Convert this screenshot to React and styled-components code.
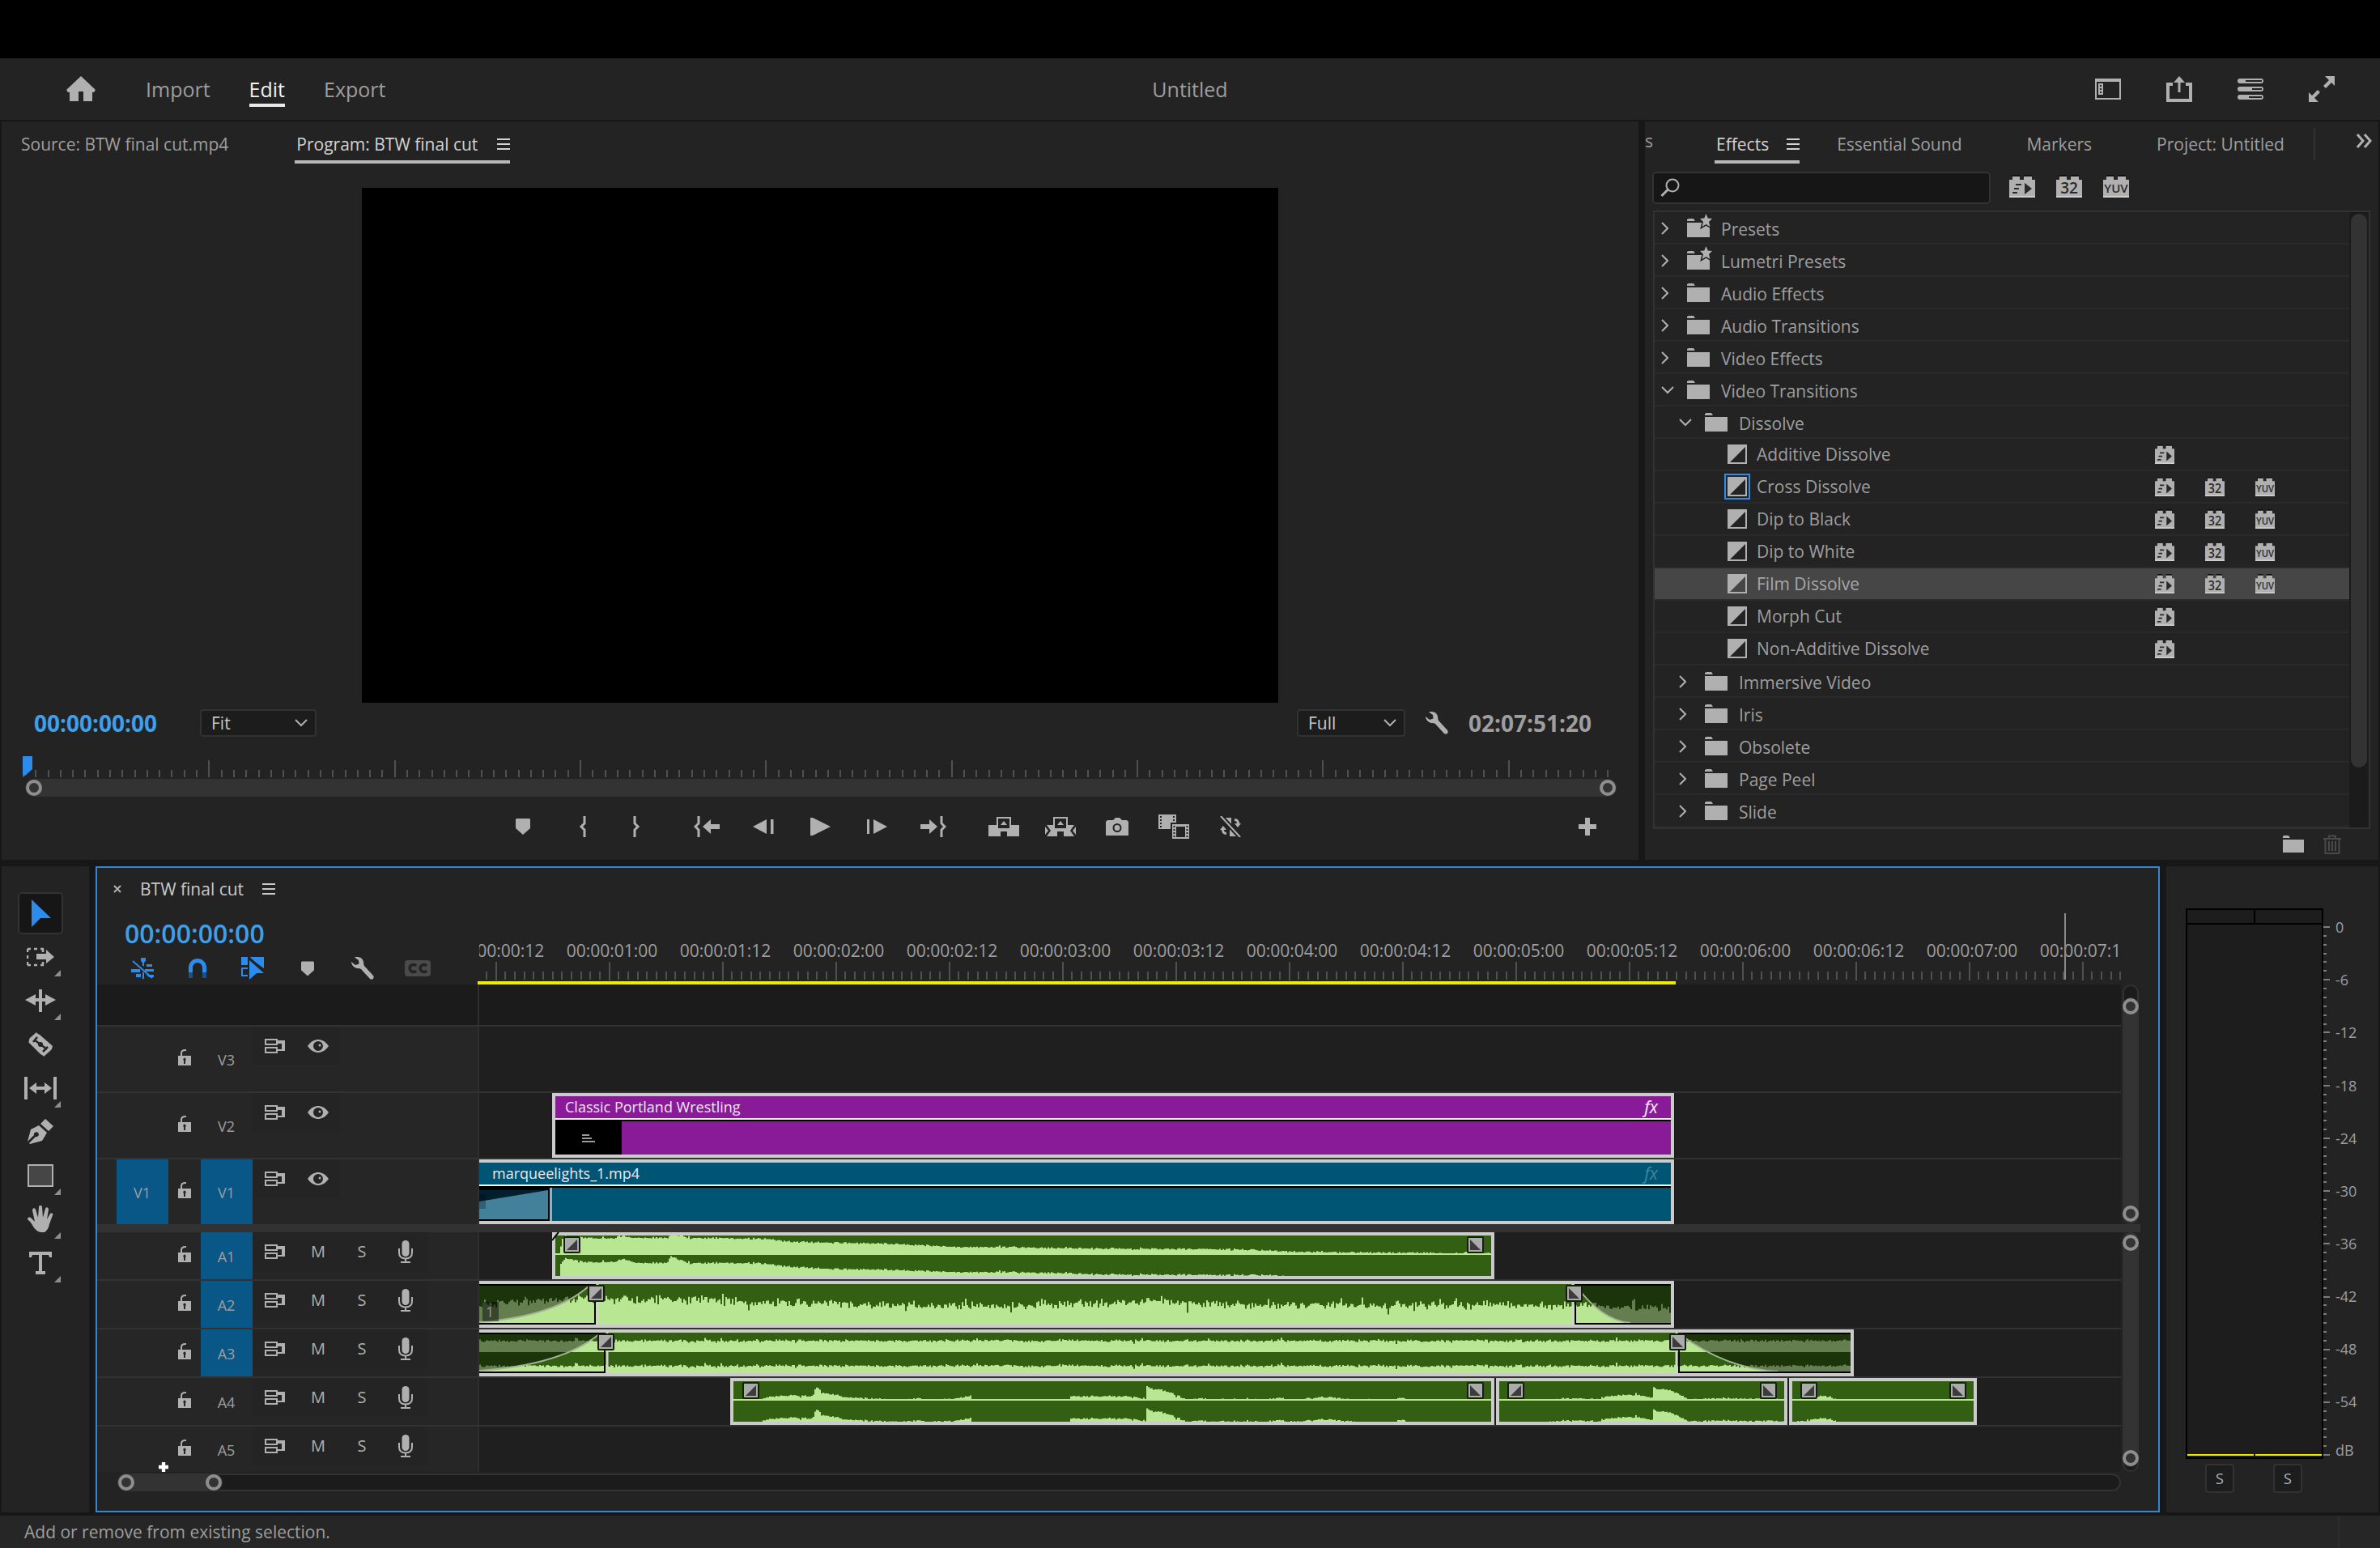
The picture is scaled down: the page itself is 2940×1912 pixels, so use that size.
import React from "react";
import styled, { createGlobalStyle, css } from "styled-components";

const c = {
  gap: "#171717",
  panel: "#232323",
  line: "#323232",
  lane: "#1f1f1f",
  well: "#1b1b1b",
  text: "#9e9e9e",
  bright: "#d2d2d2",
  icon: "#b0b0b0",
  blue: "#2d8ceb",
  time: "#3f9fe8",
  target: "#095786",
  dark: "#335f12",
  light: "#b9e693",
  edge: "#cbcbcb",
};

const Global = createGlobalStyle`
  *, *::before, *::after { box-sizing: border-box; }
  html, body { margin: 0; background: #000; }
  body, button, input, select {
    font-family: "Open Sans", "Noto Sans", sans-serif;
    font-size: 21px;
    line-height: 28px;
    color: ${c.text};
  }
  button, input, select { margin: 0; padding: 0; border: 0; background: none; }
  svg { display: block; flex: none; }
`;

/* ---------- shell ---------- */

const Shell = styled.div`
  display: flex;
  flex-direction: column;
  min-height: 100vh;
  padding-top: 72px;
  background: #000;
`;
const Header = styled.header`
  display: grid;
  grid-template-columns: 1fr auto 1fr;
  align-items: center;
  height: 76px;
  padding: 0 56px;
  background: ${c.panel};
`;
const Nav = styled.nav`
  display: flex;
  align-items: center;
  gap: 48px;
  padding-left: 26px;
`;
const HomeButton = styled.button`
  margin-right: 14px;
  color: ${c.icon};
`;
const NavTab = styled.button`
  height: 44px;
  font-size: 25px;
  border-top: 4px solid transparent;
  border-bottom: 4px solid ${(p) => (p.$on ? "#e8e8e8" : "transparent")};
  color: ${(p) => (p.$on ? "#f0f0f0" : c.text)};
`;
const Title = styled.h1`
  margin: 0;
  font-size: 25px;
  font-weight: 400;
`;
const HeaderTools = styled.div`
  display: flex;
  justify-content: flex-end;
  align-items: center;
  gap: 56px;
`;
const IconButton = styled.button`
  display: grid;
  place-items: center;
  color: ${(p) => p.$tone || c.icon};
`;
const Upper = styled.main`
  display: grid;
  grid-template-columns: minmax(0, 1fr) 906px;
  gap: 8px;
  padding: 2px 2px 8px;
  background: ${c.gap};
`;
const Lower = styled.div`
  flex: 1;
  display: grid;
  grid-template-columns: 108px minmax(0, 1fr) 262px;
  gap: 8px;
  padding: 0 2px 4px;
  background: ${c.gap};
`;
const Panel = styled.section`
  display: flex;
  flex-direction: column;
  min-width: 0;
  background: ${c.panel};
`;
const Status = styled.footer`
  display: flex;
  align-items: center;
  justify-content: space-between;
  height: 40px;
  padding: 0 50px 0 30px;
  background: #262626;
`;
const StatusRule = styled.span`
  width: 2px;
  height: 40px;
  background: #2e2e2e;
`;

/* ---------- tabs ---------- */

const Tabs = styled.div`
  display: flex;
  align-items: stretch;
  height: 52px;
  padding-left: ${(p) => p.$left}px;
  gap: ${(p) => p.$gap}px;
  overflow: hidden;
`;
const Tab = styled.button`
  display: flex;
  flex: none;
  align-items: center;
  gap: ${(p) => p.$menuGap || 22}px;
  padding: 8px 0 0 2px;
  white-space: nowrap;
  border-bottom: 4px solid ${(p) => (p.$on ? "#b8b8b8" : "transparent")};
  color: ${(p) => (p.$on ? c.bright : c.text)};
`;
const SpacedTab = styled(Tab)`
  margin-left: 34px;
`;
const ClippedTab = styled.span`
  flex: none;
  width: 12px;
  margin-right: 30px;
  padding-top: 10px;
`;
const TabRule = styled.span`
  flex: none;
  width: 2px;
  height: 40px;
  margin: 8px 0 0 -8px;
  background: ${c.line};
`;
const MoreTabs = styled.button`
  flex: none;
  padding-top: 4px;
  margin: 0 8px 8px auto;
  color: ${c.icon};
`;

/* ---------- program monitor ---------- */

const Video = styled.div`
  width: 56%;
  aspect-ratio: 1132 / 636;
  margin: 30px auto 0;
  background: #000;
`;
const MonitorBar = styled.div`
  display: flex;
  align-items: center;
  height: 34px;
  margin-top: 8px;
  padding: 0 58px 0 40px;
`;
const Timecode = styled.span`
  font-size: ${(p) => (p.$big ? 32 : 28)}px;
  line-height: 34px;
  font-weight: ${(p) => (p.$big ? 600 : 700)};
  color: ${(p) => (p.$dim ? c.text : c.time)};
`;
const SelectBox = styled.label`
  display: grid;
  align-items: center;
  width: ${(p) => p.$w}px;
  margin-left: ${(p) => (p.$push ? "auto" : "53px")};
  color: ${c.icon};
  & > * { grid-area: 1 / 1; }
  & > svg { justify-self: end; margin-right: 11px; pointer-events: none; }
`;
const Select = styled.select`
  appearance: none;
  width: 100%;
  height: 34px;
  padding-left: 12px;
  border: 2px solid ${c.line};
  border-radius: 4px;
  background: #1c1c1c;
  color: #c6c6c6;
`;
const Settings = styled(IconButton)`
  margin: 0 25px;
`;
const MonitorRuler = styled.div`
  margin: 24px 37px 0 26px;
`;
const ScrollRow = styled.div`
  margin: 2px 27px 0 29px;
`;
const Transport = styled.div`
  display: grid;
  grid-template-columns: 13fr auto 10fr;
  align-items: center;
  height: 50px;
  margin: 12px 0 16px;
`;
const Groups = styled.div`
  grid-column: 2;
  display: flex;
  gap: 17px;
`;
const Group = styled.div`
  display: flex;
`;
const TransportButton = styled(IconButton)`
  width: 70px;
  height: 50px;
`;
const AddButton = styled(IconButton)`
  justify-self: end;
  margin-right: 52px;
`;

/* ---------- scroll bars ---------- */

const Bar = styled.div`
  display: flex;
  flex-direction: ${(p) => (p.$v ? "column" : "row")};
  ${(p) =>
    p.$v
      ? css`width: 20px; padding: ${p.$pad};`
      : css`height: 22px;`}
  border: ${(p) => (p.$well ? `2px solid ${c.line}` : "0")};
  border-radius: 11px;
  background: ${(p) => (p.$well ? c.well : "transparent")};
`;
const Grip = styled.div`
  display: flex;
  flex: ${(p) => (p.$w ? "none" : 1)};
  flex-direction: ${(p) => (p.$v ? "column" : "row")};
  align-items: center;
  justify-content: space-between;
  width: ${(p) => (p.$w ? `${p.$w}px` : "auto")};
  margin: ${(p) => (p.$w ? "-2px 0 -2px -2px" : 0)};
  border-radius: 11px;
  background: #333;
`;
const Ring = styled.span`
  width: 20px;
  height: 20px;
  margin: ${(p) => (p.$v ? "1px 0" : "0 1px")};
  border: 4px solid #8e8e8e;
  border-radius: 50%;
`;

/* ---------- effects panel ---------- */

const SearchRow = styled.div`
  display: flex;
  align-items: center;
  gap: 26px;
  padding: 10px 9px 8px;
`;
const SearchBox = styled.label`
  display: flex;
  align-items: center;
  gap: 10px;
  width: 418px;
  height: 40px;
  margin-right: -3px;
  padding: 0 8px;
  border: 2px solid ${c.line};
  border-radius: 5px;
  background: #161616;
  color: ${c.icon};
`;
const SearchInput = styled.input`
  flex: 1;
  min-width: 0;
  height: 34px;
  outline: none;
`;
const FilterButton = styled(IconButton)`
  padding-bottom: 4px;
`;
const ListFrame = styled.div`
  display: flex;
  margin: 0 10px;
  border: 2px solid ${c.line};
`;
const Tree = styled.ul`
  flex: 1;
  margin: 0;
  padding: 0;
  list-style: none;
`;
const TreeRow = styled.li`
  display: grid;
  grid-template-columns: minmax(0, 1fr) 62px 62px 116px;
  align-items: center;
  height: 40px;
  padding-left: ${(p) => 8 + p.$depth * 22}px;
  border-bottom: 2px solid #2a2a2a;
  background: ${(p) => (p.$on ? "#464646" : "transparent")};
`;
const TreeLabel = styled.button`
  display: flex;
  align-items: center;
  padding-top: ${(p) => (p.$leaf ? 0 : 4)}px;
  text-align: left;
  color: ${(p) => (p.$on ? "#a6a6a6" : c.text)};
`;
const Chevron = styled.span`
  display: grid;
  place-items: center start;
  width: 32px;
  height: 28px;
  padding-bottom: 2px;
  color: ${c.icon};
`;
const FolderCell = styled.span`
  width: 42px;
  padding-bottom: 2px;
  color: ${c.icon};
`;
const LeafCell = styled.span`
  display: grid;
  place-items: center;
  width: 32px;
  height: 32px;
  margin: 0 8px 0 56px;
  border: 2px solid ${(p) => (p.$on ? c.blue : "transparent")};
  color: ${c.icon};
`;
const TreeScroll = styled.div`
  width: 24px;
  padding: 2px 2px 74px;
  background: ${c.well};
`;
const TreeThumb = styled.div`
  height: 100%;
  border-radius: 10px;
  background: #333;
`;
const PanelFoot = styled.div`
  display: flex;
  align-items: center;
  justify-content: flex-end;
  gap: 24px;
  height: 38px;
  padding-right: 46px;
`;

/* ---------- tool strip ---------- */

const ToolStrip = styled(Panel)`
  align-items: center;
  padding: 32px 12px 0 0;
  gap: 2px;
`;
const Tool = styled.button`
  position: relative;
  display: grid;
  place-items: center;
  width: 56px;
  height: 52px;
  border: 2px solid ${(p) => (p.$on ? c.line : "transparent")};
  border-radius: 5px;
  background: ${(p) => (p.$on ? "#161616" : "transparent")};
  color: ${(p) => (p.$on ? c.blue : c.icon)};
  ${(p) =>
    p.$more &&
    css`
      &::after {
        content: "";
        position: absolute;
        right: 1px;
        bottom: 0;
        border: 4px solid transparent;
        border-right-color: #8f8f8f;
        border-bottom-color: #8f8f8f;
      }
    `}
`;

/* ---------- timeline ---------- */

const Timeline = styled(Panel)`
  position: relative;
  border: 2px solid #3486d9;
`;
const SequenceTab = styled.div`
  display: flex;
  align-items: center;
  gap: 23px;
  height: 54px;
  padding: 0 0 2px 20px;
  color: #c8c8c8;
`;
const SequenceHead = styled.div`
  display: grid;
  grid-template-columns: 470px minmax(0, 1fr);
  height: 90px;
  margin-right: 46px;
`;
const SequenceInfo = styled.div`
  padding: 10px 0 0 34px;
`;
const SequenceTools = styled.div`
  display: flex;
  align-items: center;
  height: 28px;
  margin: 11px 0 0 -12px;
`;
const SequenceTool = styled(IconButton)`
  width: 68px;
`;
const Ruler = styled.div`
  position: relative;
  display: flex;
  flex-direction: column;
  justify-content: flex-end;
  overflow: hidden;
`;
const RulerLabels = styled.div`
  display: flex;
  margin-left: 2px;
  overflow: hidden;
  white-space: nowrap;
  line-height: 28px;
`;
const RulerLabel = styled.span`
  flex: none;
  width: 140px;
  text-align: center;
  &:first-child { margin-left: -46px; }
`;
const RulerTicks = styled.svg`
  width: 100%;
  height: 24px;
  padding-left: 2px;
`;
const WorkArea = styled.div`
  width: 1480px;
  height: 4px;
  background: #ecec08;
`;
const Cursor = styled.div`
  position: absolute;
  left: 1960px;
  top: 2px;
  width: 2px;
  height: 82px;
  background: #8a8a8a;
`;
const TracksRow = styled.div`
  display: flex;
`;
const Tracks = styled.div`
  flex: 1;
  min-width: 0;
`;
const Track = styled.div`
  display: grid;
  grid-template-columns: 470px minmax(0, 1fr);
  height: ${(p) => p.$h}px;
  ${(p) => p.$rule && css`border-bottom: 2px solid ${c.line};`}
`;
const TrackHead = styled.div`
  display: grid;
  grid-template-columns: 24px 64px 40px 64px auto 1fr;
  background: ${(p) => (p.$blank ? c.well : "#262626")};
`;
const Patch = styled.button`
  grid-column: ${(p) => (p.$source ? 2 : 4)};
  padding: 2px 1px 0 0;
  font-size: 18px;
  background: ${(p) => (p.$on ? c.target : "transparent")};
`;
const Lock = styled(IconButton)`
  grid-column: 3;
  padding-bottom: 4px;
`;
const Toggles = styled.div`
  grid-column: 5;
  display: grid;
  grid-auto-flow: column;
  grid-auto-columns: 54px;
  height: 48px;
  background: #242424;
`;
const Toggle = styled(IconButton)`
  font-size: 20px;
`;
const Lane = styled.div`
  position: relative;
  overflow: hidden;
  border-left: 2px solid #2e2e2e;
  background: ${(p) => (p.$blank ? c.well : c.lane)};
`;
const Divider = styled.div`
  height: 10px;
  background: ${c.line};
`;
const ClipBox = styled.div`
  position: absolute;
  top: 0;
  bottom: 0;
  display: flex;
  flex-direction: column;
  border: 4px solid ${c.edge};
  border-left-width: ${(p) => (p.$cut ? 0 : 4)}px;
  background: ${(p) => p.$fill};
  outline: 1px solid #1a1a1a;
`;
const ClipName = styled.div`
  display: flex;
  justify-content: space-between;
  align-items: center;
  height: 29px;
  padding: 0 16px 2px ${(p) => (p.$cut ? 16 : 12)}px;
  border-bottom: 2px solid #fff;
  font-size: 18px;
  line-height: 24px;
  color: #f0e6f2;
`;
const Fx = styled.span`
  font-family: "Noto Sans", sans-serif;
  font-style: italic;
  font-size: 21px;
  color: ${(p) => (p.$dim ? "#3d83a0" : "#f0e6f2")};
`;
const ClipBody = styled.div`
  flex: 1;
  border-top: 2px solid #000;
`;
const Thumb = styled.div`
  display: grid;
  place-items: center;
  width: 82px;
  height: 100%;
  background: #000;
`;
const VScroll = styled.div`
  display: grid;
  grid-template-rows: minmax(0, 1fr) 10px minmax(0, 1fr);
  width: 46px;
  padding-left: 2px;
`;
const VDivider = styled.div`
  width: 24px;
  margin-left: -2px;
  background: ${c.line};
`;
const HScroll = styled.div`
  margin: 2px 46px 22px 25px;
`;
const Pointer = styled.div`
  position: absolute;
  left: 76px;
  top: 734px;
`;

/* ---------- meters ---------- */

const Meters = styled(Panel)`
  padding: 52px 0 0 24px;
`;
const MeterRow = styled.div`
  display: flex;
`;
const Meter = styled.div`
  width: 170px;
  height: 680px;
  border: 2px solid #000;
  background: #1d1d1d;
  display: grid;
  grid-template-columns: 1fr 1fr;
  grid-template-rows: 18px 1fr 4px;
  column-gap: 2px;
`;
const ClipLight = styled.span`
  border-bottom: 2px solid #000;
  box-shadow: 2px 0 0 #000;
`;
const Peak = styled.span`
  grid-row: 3;
  height: 2px;
  background: #ecec08;
`;
const Scale = styled.div`
  padding: 13px 0 0 7px;
  font-size: 18px;
  line-height: 20px;
`;
const ScaleList = styled.div`
  display: flex;
  flex-direction: column;
  justify-content: space-between;
  height: 606px;
  margin-bottom: 40px;
`;
const Solos = styled.div`
  display: flex;
  gap: 48px;
  padding: 6px 0 0 24px;
`;
const Solo = styled.button`
  width: 36px;
  height: 36px;
  border: 2px solid ${c.line};
  border-radius: 4px;
  background: #1d1d1d;
  font-size: 18px;
  color: ${c.icon};
`;

/* ---------- icons ---------- */

const Svg = ({ w, h, children, ...rest }) => (
  <svg width={w} height={h} viewBox={`0 0 ${w} ${h}`} fill="currentColor" aria-hidden="true" {...rest}>
    {children}
  </svg>
);
const S = (props) => <g fill="none" stroke="currentColor" strokeWidth="2" {...props} />;

const Home = () => (
  <Svg w={36} h={32}><path d="M18 0 36 17 34 20H32V31H21V19H15V31H4V20H2L0 17Z" /></Svg>
);
const Burger = () => (
  <Svg w={16} h={14}><path d="M0 0H16V2H0ZM0 6H16V8H0ZM0 12H16V14H0Z" /></Svg>
);
const Workspaces = () => (
  <Svg w={32} h={26}>
    <path fillRule="evenodd" d="M0 0H32V26H0ZM2 4V24H30V4Z" />
    <path fillRule="evenodd" d="M4 6H10V20H4ZM6 8V10H8V8ZM6 12V14H8V12ZM6 16V18H8V16Z" />
  </Svg>
);
const Share = () => (
  <Svg w={32} h={32}>
    <path d="M0 8H8V12H4V28H28V12H24V8H32V32H0Z" />
    <path d="M16 0 23 8H17.500V20H14.500V8H9Z" />
  </Svg>
);
const Progress = () => (
  <Svg w={32} h={26}>
    {[[0, 10], [10, 18], [20, 14]].map(([y, x]) => (
      <path key={y} fillRule="evenodd" d={`M3 ${y}H29A3 3 0 0 1 29 ${y + 6}H3A3 3 0 0 1 3 ${y}ZM${x} ${y + 2}V${y + 4}H30V${y + 2}Z`} />
    ))}
  </Svg>
);
const Expand = () => (
  <Svg w={32} h={32}>
    <path d="M20 0H32V12L28 8 21 15 18 12 25 5ZM12 32H0V20L4 24 11 17 14 20 7 27Z" />
  </Svg>
);
const Down = () => <Svg w={16} h={10}><S><path d="M1 1 8 8 15 1" /></S></Svg>;
const Right = () => <Svg w={9} h={16}><S><path d="M1 1 8 8 1 15" /></S></Svg>;
const More = () => <Svg w={20} h={18}><S strokeWidth="3"><path d="M2 1 9 9 2 17M11 1 18 9 11 17" /></S></Svg>;
const Glass = () => (
  <Svg w={24} h={24}><S><circle cx="15" cy="9" r="7.500" /><path strokeWidth="3" d="M9.500 14 1.500 22" /></S></Svg>
);
const STAR = "M23.500-5 25.700 0.500 31 1 27 5 28.500 11 23.500 8 18.500 11 20 5 16 1 21.300 0.500Z";
const Folder = ({ star }) => (
  <Svg w={28} h={26} overflow="visible">
    <path d="M0 4V2L2 1H8L10 4ZM0 6H28V24H0Z" />
    {star && <path stroke={c.panel} strokeWidth="3" d={STAR} />}
    {star && <path d={STAR} />}
  </Svg>
);
const BinFolder = () => <Svg w={26} h={22}><path d="M0 3V1L1 0H7L9 3ZM0 5H26V21H0Z" /></Svg>;
const Trash = () => (
  <Svg w={22} h={24}>
    <S><path d="M0 5H22M7 5V1.500H15V5M2.500 5V23H19.500V5M7 8V20M11 8V20M15 8V20" /></S>
  </Svg>
);
const TransitionIcon = () => (
  <Svg w={24} h={24}><path fillRule="evenodd" d="M0 0H24V24H0ZM22 3 3 22H22Z" /></Svg>
);
const Badge = ({ kind, big }) => (
  <svg width={big ? 32 : 24} height={big ? 28 : 24} viewBox="0 0 32 28" aria-hidden="true" preserveAspectRatio="none">
    <path fill="#111" d="M4 0H13V3H4ZM18 0H28V3H18Z" />
    <path fill={c.icon} d="M0 6H4V2H13V6H18V2H28V6H32V28H0Z" />
    <path fill="#cfcfcf" d="M0 26H32V28H0Z" />
    {kind === "fx" ? (
      <path fill="#2a2a2a" d="M19 10 28 17 19 24ZM8 11H15V13H8ZM6 16H12V18H6ZM4 21H10V23H4Z" />
    ) : (
      <text x="16" y={kind === "32" ? 23 : 22} textAnchor="middle" fontSize={kind === "32" ? 19 : 15} fontWeight="600" fill="#2a2a2a">{kind}</text>
    )}
  </svg>
);
const Wrench = () => (
  <Svg w={28} h={28}>
    <path d="M4 0.500C9-1 14 1 15 6C15.500 8 15 9.500 16 11L27 23C29 26 26 29 23 27L12 15C11 14 9 14.500 7 14C3 13 0 9.500 0 6L5 10 9.500 8.500 9 4Z" />
  </Svg>
);
const Marker = ({ w = 18, h = 20 }) => (
  <svg width={w} height={h} viewBox="0 0 18 20" fill="currentColor" aria-hidden="true"><path d="M1 0H17L18 1V12L9 20 0 12V1Z" /></svg>
);
const MarkIn = () => <Svg w={18} h={26}><S strokeWidth="3"><path d="M15 0V9L11 13 15 17V26" /></S></Svg>;
const MarkOut = () => <Svg w={10} h={26}><S strokeWidth="3"><path d="M3 0V9L7 13 3 17V26" /></S></Svg>;
const GoIn = () => (
  <Svg w={32} h={26}><S strokeWidth="3"><path d="M6 0V9L2 13 6 17V26" /></S><path d="M11 13 21 4V10H32V16H21V22Z" /></Svg>
);
const GoOut = () => (
  <Svg w={32} h={26}><S strokeWidth="3"><path d="M26 0V9L30 13 26 17V26" /></S><path d="M21 13 11 4V10H0V16H11V22Z" /></Svg>
);
const StepBack = () => <Svg w={26} h={18}><path d="M17 0V18L0 9ZM22 0H25.500V18H22Z" /></Svg>;
const StepFwd = () => <Svg w={26} h={18}><path d="M9 0V18L26 9ZM1 0H4V18H1Z" /></Svg>;
const Play = () => <Svg w={26} h={22}><path d="M1 0H4L26 11 4 22H1Z" /></Svg>;
const Lift = () => (
  <Svg w={38} h={24}>
    <path d="M0 10H10V14H28V10H38V24H23V18H15V24H0Z" />
    <S><path d="M11 14V1H27V14" /></S><path d="M19 5 23 10H15Z" />
  </Svg>
);
const Extract = () => (
  <Svg w={38} h={24}>
    <path d="M2 10H10V14H28V10H36L31 17 36 24H23V18H15V24H2L7 17Z" />
    <path d="M0 12 4 17 0 22ZM38 12 34 17 38 22Z" />
    <S><path d="M11 14V1H27V14" /></S><path d="M19 5 23 10H15Z" />
  </Svg>
);
const Camera = () => (
  <Svg w={28} h={22}><path fillRule="evenodd" d="M9 3 12 0H17L20 3H26L28 5V22H0V5L2 3ZM14 7A5.500 5.500 0 1 0 14 18A5.500 5.500 0 1 0 14 7ZM14 9A3.500 3.500 0 1 1 14 16A3.500 3.500 0 1 1 14 9Z" /></Svg>
);
const Compare = () => (
  <Svg w={38} h={30}>
    <path d="M0 0H22V18H0Z" />
    <path fill={c.panel} d="M2 2h2v2h-2zM2 6h2v2h-2zM2 10h2v2h-2zM2 14h2v2h-2zM18 2h2v2h-2zM18 6h2v2h-2z" />
    <path fill={c.panel} d="M15 10H38V30H15Z" />
    <path fillRule="evenodd" d="M17 12H38V30H17ZM22 15V28H33V15ZM18.500 14h2v2h-2zM18.500 18h2v2h-2zM18.500 22h2v2h-2zM18.500 26h2v2h-2zM34.500 14h2v2h-2zM34.500 18h2v2h-2zM34.500 22h2v2h-2zM34.500 26h2v2h-2z" />
  </Svg>
);
const Proxy = () => (
  <Svg w={26} h={26}>
    <path d="M0 2H14V15L0 3ZM12 13 26 25H12Z" />
    <path d="M18 3C22 3 24 6 24 9H26L22 14 18 9H21C21 7 20 6 18 6ZM8 23C4 23 2 20 2 17H0L4 12 8 17H5C5 19 6 20 8 20Z" />
    <path stroke={c.panel} strokeWidth="6" d="M1 0 25 26" />
    <path stroke="currentColor" strokeWidth="2" d="M1 0 25 26" />
  </Svg>
);
const Plus = ({ s = 22, t = 6, color }) => (
  <svg width={s} height={s} viewBox="0 0 22 22" fill={color || "currentColor"} aria-hidden="true">
    <path d={`M${11 - t / 2} 0h${t}v${11 - t / 2}h${11 - t / 2}v${t}h-${11 - t / 2}v${11 - t / 2}h-${t}v-${11 - t / 2}h-${11 - t / 2}v-${t}h${11 - t / 2}z`} />
  </svg>
);

const Arrow = () => <Svg w={28} h={34}><path d="M3 0 27 23H14L3 34Z" /></Svg>;
const TrackSelect = () => (
  <Svg w={34} h={24}>
    <S strokeWidth="2.500" strokeDasharray="4 4"><path d="M1 2H21M1 2V23M1 22H21M20 2V8M20 22V18" /></S>
    <path d="M12 8H24V3L34 12 24 20V15H12Z" />
  </Svg>
);
const Ripple = () => <Svg w={38} h={28}><path d="M17 0H21V28H17ZM0 13 13 6V11H17V15H13V20ZM38 13 25 6V11H21V15H25V20Z" /></Svg>;
const Razor = () => (
  <Svg w={32} h={32}>
    <path d="M11 1C12 3 14 3 15 4L31 18C30 20 31 21 29 23L20 31C19 29 17 29 16 28L1 13C3 12 1 10 3 8Z" />
    <path stroke={c.panel} strokeWidth="2.500" fill="none" d="M8 10 24 22M7 13 12 7M19 25 25 19" /><circle cx="16" cy="16" r="3" fill={c.panel} />
  </Svg>
);
const Slip = () => (
  <Svg w={40} h={28}><path d="M0 0H4V28H0ZM36 0H40V28H36ZM6 14 15 7V12H25V7L34 14 25 21V16H15V21Z" /></Svg>
);
const Pen = () => (
  <Svg w={32} h={32}>
    <path d="M22 0 32 9 26 15 16 6ZM14 8 24 17 18 27 3 31 2 30 10 22A3 3 0 1 0 8 20L0 28 4 13Z" />
  </Svg>
);
const Rect = () => <Svg w={32} h={28}><rect x="1" y="1" width="30" height="26" fill="#464646" stroke="currentColor" strokeWidth="2" /></Svg>;
const Hand = () => (
  <Svg w={32} h={34}>
    <path d="M13 32C9 30 6 24 4 21L0 17C0 14 3 14 5 16L9 20 6 6C6 3 9 2 10 5L13 15 14 2C14-1 18-1 18 2L19 15 22 4C23 1 26 2 26 5L24 17 28 10C30 8 32 10 31 12L27 23C26 28 24 31 21 33H16Z" />
  </Svg>
);
const TypeIcon = () => <Svg w={28} h={28}><path d="M0 0H28V7H25L24 4H16V24H20V28H8V24H12V4H4L3 7H0Z" /></Svg>;

const Snow = () => (
  <Svg w={28} h={26}>
    <path d="M12 0H18V4L16 6V10H14V6L12 4ZM19 8H26V11H19ZM0 14H11V18H0ZM17 14H28V17H17ZM6 20H12V24H6ZM14 18H16V26H14ZM19 21H28V24H22Z" />
    <path stroke="currentColor" strokeWidth="2" d="M2 4 26 25" />
  </Svg>
);
const Magnet = () => (
  <Svg w={24} h={24}>
    <S strokeWidth="5"><path d="M3.500 17V11A8.500 8.500 0 0 1 20.500 11V17" /></S>
    <path fill="#1d4f80" d="M1 17H6V24H1ZM18 17H23V24H18Z" />
  </Svg>
);
const Linked = () => (
  <Svg w={28} h={28}>
    <path d="M0 0H8V10H0ZM11 0H28V14L11 2ZM10 4 28 20H19L10 28Z" />
    <path stroke={c.panel} strokeWidth="2" d="M10 1 28 17" />
    <S><path d="M8 14H1V23H8" /></S>
  </Svg>
);
const Captions = () => (
  <Svg w={32} h={20}>
    <rect width="32" height="20" rx="4" fill="#4a4a4a" />
    <S stroke="#232323" strokeWidth="3.500"><path d="M14 7A4.500 4.500 0 1 0 14 13M27 7A4.500 4.500 0 1 0 27 13" /></S>
  </Svg>
);
const LockIcon = () => (
  <Svg w={16} h={20}>
    <path fillRule="evenodd" d="M0 8H16V20H0ZM8 10.500A2 2 0 0 0 7 14V18H9V14A2 2 0 0 0 8 10.500Z" />
    <S><path d="M4 8V5C4 2 6 1 9 1H10" /></S>
  </Svg>
);
const Sync = () => (
  <Svg w={26} h={18}>
    <S><path d="M2 1H16V7H2ZM2 11H16V17H2Z" /></S>
    <path d="M15 2H26V15H15V13H22V6H15Z" />
  </Svg>
);
const Eye = () => (
  <Svg w={26} h={16}>
    <path fillRule="evenodd" d="M0 8C4 2 9 0 13 0S22 2 26 8C22 14 17 16 13 16S4 14 0 8ZM13 2A6 6 0 1 0 13 14A6 6 0 1 0 13 2Z" />
    <circle cx="15" cy="7" r="1.500" />
  </Svg>
);
const Mic = () => (
  <Svg w={18} h={28}>
    <rect x="4.500" y="0" width="9" height="20" rx="4.500" />
    <S><path d="M1 10V15C1 20 4 22.500 9 22.500S17 20 17 15V10M9 22V27M3 27H15" /></S>
  </Svg>
);

/* ---------- wave forms ---------- */

const random = (seed) => {
  let s = seed;
  return () => {
    s = (s * 16807) % 2147483647;
    return s / 2147483647;
  };
};
const levelAt = (points, x) => {
  if (x < points[0][0]) return 0;
  for (let i = 1; i < points.length; i++) {
    const [x1, y1] = points[i];
    const [x0, y0] = points[i - 1];
    if (x <= x1) return y0 + ((y1 - y0) * (x - x0)) / (x1 - x0 || 1);
  }
  return 0;
};
const wavePath = (points, width, base, top, noise, seed) => {
  const rnd = random(seed);
  let d = `M0 ${base}`;
  for (let x = 0; x < width; x += 2) {
    const level = levelAt(points, x);
    const spike = rnd() > 0.93 ? 2.2 : 1;
    const wobble = (rnd() + rnd() - 1) * noise * spike;
    const y = level <= 0 ? base : Math.max(top, Math.min(base, base - level - wobble));
    d += `V${y.toFixed(1)}H${x + 2}`;
  }
  return `${d}V${base}Z`;
};

const Handle = ({ x, out }) => (
  <g transform={`translate(${x} 1)`}>
    <rect width="21" height="21" rx="2" fill="#14200c" />
    <rect x="2" y="2" width="17" height="17" fill="#ababab" />
    <path d={out ? "M4 4V17H17Z" : "M17 4V17H4Z"} fill="#3c3c3c" />
  </g>
);
const Fade = ({ from, to, out }) => {
  const w = to - from;
  const curve = out
    ? `M${from + 2} 2Q${from + w * 0.28} 45 ${from + w * 0.58} 48`
    : `M${from} 47Q${from + w * 0.65} 40 ${to - 8} 2`;
  const shade = out ? `${curve}H${to}V0H${from}Z` : `${curve}V0H${from}Z`;
  return (
    <g>
      <path d={shade} fill="#000" opacity="0.45" />
      <path d={curve} fill="none" stroke="#a3b594" strokeWidth="2" />
      <path d={`M${from} 1H${to}M${from} 49H${to}`} stroke="#000" strokeWidth="2" />
      <path d={out ? `M${from + 1} 0V50` : `M${to - 1} 0V50`} stroke="#000" strokeWidth="2" />
      <path d={out ? `M${from - 2} 0V50` : `M${to + 2} 0V50`} stroke="#cfd8c6" strokeWidth="3" />
    </g>
  );
};

const A1_TOP = [[4, 1], [8, 20], [12, 23], [35, 21], [73, 20], [77, 24], [91, 22], [95, 21], [138, 21], [142, 24], [152, 24], [165, 21], [256, 20], [291, 16], [354, 15], [431, 13], [494, 10], [600, 9], [670, 8], [838, 7], [915, 4], [998, 3], [1114, 2], [1164, 2]];
const A1_BOTTOM = [[6, 15], [11, 22], [35, 17], [73, 17], [80, 21], [91, 19], [98, 16], [137, 16], [142, 24], [152, 20], [165, 16], [249, 16], [291, 11], [333, 9], [431, 7], [494, 5], [620, 4], [670, 2], [880, 1], [900, 0]];
const A2_MONO = [[0, 26], [60, 29], [140, 31], [280, 31], [350, 27], [560, 23], [700, 25], [790, 27], [830, 29], [900, 25], [1100, 23], [1300, 24], [1476, 20]];
const A3_TOP = [[0, 14], [1700, 14]];
const A3_BOTTOM = [[0, 9], [1700, 9]];
const A4_ONE = [[35, 1], [39, 4], [71, 7], [97, 5], [99, 12], [101, 17], [106, 14], [109, 9], [127, 7], [137, 4], [162, 3], [169, 2], [211, 1], [225, 3], [239, 1], [270, 2], [287, 5], [292, 7], [293, 0], [415, 0], [416, 5], [471, 6], [509, 3], [510, 19], [514, 15], [530, 13], [551, 5], [558, 1], [579, 3], [586, 1], [635, 2], [656, 1], [674, 4], [684, 1], [726, 4], [747, 3], [768, 1], [817, 1], [824, 4], [834, 0]];
const A4_TWO = [[60, 1], [85, 3], [120, 1], [130, 5], [169, 8], [186, 4], [188, 4], [189, 19], [193, 14], [211, 13], [225, 6], [234, 1], [274, 3], [309, 2], [330, 3], [352, 1]];
const A4_THREE = [[2, 1], [12, 2], [35, 6], [45, 5], [56, 1], [58, 0]];
const softer = (points) => points.map(([x, y]) => [x, Math.max(0, y - 1.5)]);

const stereo = (top, bottom, noise, floor) => ({ top, bottom, noise, floor });

const WaveSvg = styled.svg`
  width: 100%;
  height: 50px;
`;
const Corner = styled(Svg)`
  position: absolute;
  left: -4px;
  top: -4px;
`;

const AudioClip = ({ x, w, cut, wave, handles = [], fades = [], corner, seed, badge }) => {
  const inner = w - (cut ? 4 : 8);
  return (
    <ClipBox $cut={cut} $fill={c.dark} style={{ left: x, width: w }}>
      <WaveSvg aria-hidden="true">
        {wave.mono ? (
          <path d={wavePath(wave.mono, inner, 50, 0, wave.noise, seed)} fill={c.light} />
        ) : (
          <>
            <path d={wavePath(wave.top, inner, 24, 0, wave.noise, seed)} fill={c.light} />
            <path d={wavePath(wave.bottom, inner, 50, 25, wave.noise, seed)} fill={c.light} />
            {wave.floor && <rect y="22" width="100%" height="2" fill={c.light} />}
          </>
        )}
        {fades.map((f) => <Fade key={f.from} {...f} />)}
        {handles.map(([hx, out]) => <Handle key={hx} x={hx} out={out} />)}
        {badge && (
          <g>
            <rect x="4" y="22" width="20" height="24" fill="#000" opacity="0.45" />
            <text x="8" y="41" fontSize="18" fill="#8f9b88">{badge}</text>
          </g>
        )}
      </WaveSvg>
      {corner && <Corner w={10} h={12}><path d="M0 10 8 0" stroke="#000" strokeWidth="2" /></Corner>}
    </ClipBox>
  );
};

const TransitionRamp = () => (
  <Svg w={90} h={41}>
    <rect width="88" height="41" fill="#000" />
    <rect y="3" width="85" height="36" fill="#00202f" />
    <path d="M0 17 85 3V39H0Z" fill="#43809a" />
    <rect y="8" width="8" height="18" fill="#000" opacity="0.25" />
    <rect x="87" width="3" height="41" fill="#8fb4c4" />
  </Svg>
);

const VideoClip = ({ x, w, cut, name, fill, dim, children }) => (
  <ClipBox $cut={cut} $fill={fill} style={{ left: x, width: w }}>
    <ClipName $cut={cut}>
      <span>{name}</span>
      <Fx $dim={dim}>fx</Fx>
    </ClipName>
    <ClipBody>{children}</ClipBody>
  </ClipBox>
);

/* ---------- data ---------- */

const EFFECTS = [
  { d: 0, t: "Presets", star: true },
  { d: 0, t: "Lumetri Presets", star: true },
  { d: 0, t: "Audio Effects" },
  { d: 0, t: "Audio Transitions" },
  { d: 0, t: "Video Effects" },
  { d: 0, t: "Video Transitions", open: true },
  { d: 1, t: "Dissolve", open: true },
  { d: 1, t: "Additive Dissolve", leaf: 1 },
  { d: 1, t: "Cross Dissolve", leaf: 3, preset: true },
  { d: 1, t: "Dip to Black", leaf: 3 },
  { d: 1, t: "Dip to White", leaf: 3 },
  { d: 1, t: "Film Dissolve", leaf: 3, on: true },
  { d: 1, t: "Morph Cut", leaf: 1 },
  { d: 1, t: "Non-Additive Dissolve", leaf: 1 },
  { d: 1, t: "Immersive Video" },
  { d: 1, t: "Iris" },
  { d: 1, t: "Obsolete" },
  { d: 1, t: "Page Peel" },
  { d: 1, t: "Slide" },
];
const BADGES = ["fx", "32", "YUV"];

const TOOLS = [
  ["Selection", Arrow, false],
  ["Track select forward", TrackSelect, true],
  ["Ripple edit", Ripple, true],
  ["Razor", Razor, false],
  ["Slip", Slip, true],
  ["Pen", Pen, false],
  ["Rectangle", Rect, true],
  ["Hand", Hand, true],
  ["Type", TypeIcon, true],
];

const TRANSPORT = [
  [["Add marker", Marker], ["Mark in", MarkIn], ["Mark out", MarkOut]],
  [["Go to in", GoIn], ["Step back", StepBack], ["Play", Play], ["Step forward", StepFwd], ["Go to out", GoOut]],
  [["Lift", Lift], ["Extract", Extract], ["Export frame", Camera], ["Comparison view", Compare], ["Toggle proxies", Proxy]],
];

const SmallMarker = () => <Marker w={16} h={19} />;
const SEQUENCE_TOOLS = [
  ["Insert as nests", Snow, c.blue],
  ["Snap", Magnet, c.blue],
  ["Linked selection", Linked, c.blue],
  ["Add marker", SmallMarker, c.icon],
  ["Timeline settings", Wrench, c.icon],
  ["Captions", Captions, c.icon],
];

const TIMES = Array.from({ length: 15 }, (_, i) => {
  const n = i + 1;
  return `00:00:${String(Math.floor(n / 2)).padStart(2, "0")}:${n % 2 ? "12" : "00"}`;
});

const LEVELS = ["0", "-6", "-12", "-18", "-24", "-30", "-36", "-42", "-48", "-54"];

/* ---------- parts ---------- */

const Scroll = ({ v, well, grip, pad }) => (
  <Bar $v={v} $well={well} $pad={pad}>
    <Grip $v={v} $w={grip}>
      <Ring $v={v} />
      <Ring $v={v} />
    </Grip>
  </Bar>
);

const Monitor = () => (
  <Panel>
    <Tabs $left={22} $gap={82}>
      <Tab>Source: BTW final cut.mp4</Tab>
      <Tab $on $menuGap={24}>Program: BTW final cut <Burger /></Tab>
    </Tabs>
    <Video />
    <MonitorBar>
      <Timecode>00:00:00:00</Timecode>
      <SelectBox $w={144}>
        <Select aria-label="Zoom level" defaultValue="Fit"><option>Fit</option></Select>
        <Down />
      </SelectBox>
      <SelectBox $w={134} $push>
        <Select aria-label="Playback resolution" defaultValue="Full"><option>Full</option></Select>
        <Down />
      </SelectBox>
      <Settings aria-label="Settings"><Wrench /></Settings>
      <Timecode $dim>02:07:51:20</Timecode>
    </MonitorBar>
    <MonitorRuler>
      <svg width="100%" height="26" viewBox="0 0 1959 26" preserveAspectRatio="none" aria-hidden="true">
        {Array.from({ length: 129 }, (_, i) => (
          <rect key={i} x={Math.round(i * 15.29)} y={i % 15 ? 17 : i ? 5 : 17} width="2" height={i % 15 ? 9 : i ? 21 : 9} fill="#505050" />
        ))}
        <path d="M0 0H12V16L3 24H0Z" fill={c.blue} />
      </svg>
    </MonitorRuler>
    <ScrollRow><Scroll /></ScrollRow>
    <Transport>
      <Groups>
        {TRANSPORT.map((group, i) => (
          <Group key={i}>
            {group.map(([name, Icon]) => (
              <TransportButton key={name} aria-label={name}><Icon /></TransportButton>
            ))}
          </Group>
        ))}
      </Groups>
      <AddButton aria-label="Button editor"><Plus /></AddButton>
    </Transport>
  </Panel>
);

const Effects = () => (
  <Panel>
    <Tabs $left={0} $gap={44}>
      <ClippedTab>s</ClippedTab>
      <Tab $on>Effects <Burger /></Tab>
      <Tab>Essential Sound</Tab>
      <SpacedTab>Markers</SpacedTab>
      <SpacedTab>Project: Untitled</SpacedTab>
      <TabRule />
      <MoreTabs aria-label="More panels"><More /></MoreTabs>
    </Tabs>
    <SearchRow>
      <SearchBox>
        <Glass />
        <SearchInput type="text" aria-label="Search effects" />
      </SearchBox>
      {BADGES.map((b) => (
        <FilterButton key={b} aria-label={`Filter ${b}`}><Badge kind={b} big /></FilterButton>
      ))}
    </SearchRow>
    <ListFrame>
      <Tree>
        {EFFECTS.map((e) => (
          <TreeRow key={e.t} $depth={e.d} $on={e.on}>
            <TreeLabel $on={e.on} $leaf={e.leaf}>
              {e.leaf ? (
                <LeafCell $on={e.preset}><TransitionIcon /></LeafCell>
              ) : (
                <>
                  <Chevron>{e.open ? <Down /> : <Right />}</Chevron>
                  <FolderCell><Folder star={e.star} /></FolderCell>
                </>
              )}
              {e.t}
            </TreeLabel>
            {BADGES.slice(0, e.leaf || 0).map((b) => <Badge key={b} kind={b} />)}
          </TreeRow>
        ))}
      </Tree>
      <TreeScroll><TreeThumb /></TreeScroll>
    </ListFrame>
    <PanelFoot>
      <IconButton aria-label="New bin"><BinFolder /></IconButton>
      <IconButton aria-label="Delete" $tone="#4a4a4a"><Trash /></IconButton>
    </PanelFoot>
  </Panel>
);

const TrackRow = ({ name, kind, h, rule, source, on, children }) => (
  <Track $h={h} $rule={rule}>
    <TrackHead>
      {source && <Patch $source $on>{source}</Patch>}
      <Lock aria-label={`Lock ${name}`}><LockIcon /></Lock>
      <Patch $on={on}>{name}</Patch>
      <Toggles>
        <Toggle aria-label="Sync lock"><Sync /></Toggle>
        {kind === "video" ? (
          <Toggle aria-label="Show track"><Eye /></Toggle>
        ) : (
          <>
            <Toggle>M</Toggle>
            <Toggle>S</Toggle>
            <Toggle aria-label="Record"><Mic /></Toggle>
          </>
        )}
      </Toggles>
    </TrackHead>
    <Lane>{children}</Lane>
  </Track>
);

const Sequence = () => (
  <Timeline>
    <SequenceTab>
      <IconButton aria-label="Close"><Svg w={10} h={10}><S><path d="M1 1 9 9M9 1 1 9" /></S></Svg></IconButton>
      <span>BTW final cut</span>
      <IconButton aria-label="Panel menu" $tone="#c8c8c8"><Burger /></IconButton>
    </SequenceTab>
    <SequenceHead>
      <SequenceInfo>
        <Timecode $big>00:00:00:00</Timecode>
        <SequenceTools>
          {SEQUENCE_TOOLS.map(([name, Icon, tone]) => (
            <SequenceTool key={name} aria-label={name} $tone={tone}><Icon /></SequenceTool>
          ))}
        </SequenceTools>
      </SequenceInfo>
      <Ruler>
        <RulerLabels>
          {TIMES.map((t) => <RulerLabel key={t}>{t}</RulerLabel>)}
        </RulerLabels>
        <RulerTicks aria-hidden="true">
          {Array.from({ length: 176 }, (_, i) => {
            const major = i % 12 === 1;
            return <rect key={i} x={Math.round(8 + i * 11.667)} y={major ? 0 : 12} width="2" height={major ? 23 : 10} fill="#505050" />;
          })}
        </RulerTicks>
        <WorkArea />
        <Cursor />
      </Ruler>
    </SequenceHead>
    <TracksRow>
      <Tracks>
        <Track $h={52} $rule>
          <TrackHead $blank />
          <Lane $blank />
        </Track>
        <TrackRow name="V3" kind="video" h={82} rule />
        <TrackRow name="V2" kind="video" h={82} rule>
          <VideoClip x={90} w={1386} name="Classic Portland Wrestling" fill="#891b99">
            <Thumb>
              <Svg w={18} h={12}><path fill="#9a9a9a" d="M1 1H10V3H1ZM1 5H13V7H1ZM1 9H17V11H1Z" /></Svg>
            </Thumb>
          </VideoClip>
        </TrackRow>
        <TrackRow name="V1" kind="video" h={80} source="V1" on>
          <VideoClip x={0} w={1476} cut name="marqueelights_1.mp4" fill="#005574" dim>
            <TransitionRamp />
          </VideoClip>
        </TrackRow>
        <Divider />
        <TrackRow name="A1" h={60} rule on>
          <AudioClip x={90} w={1164} wave={stereo(A1_TOP, A1_BOTTOM, 1.4, true)} seed={11} corner handles={[[10, false], [1126, true]]} />
        </TrackRow>
        <TrackRow name="A2" h={60} rule on>
          <AudioClip x={0} w={1476} cut wave={{ mono: A2_MONO, noise: 6 }} seed={23} badge="1"
            fades={[{ from: 0, to: 144 }, { from: 1353, to: 1472, out: true }]}
            handles={[[134, false], [1342, true]]} />
        </TrackRow>
        <TrackRow name="A3" h={60} rule on>
          <AudioClip x={0} w={1698} cut wave={stereo(A3_TOP, A3_BOTTOM, 2, false)} seed={37}
            fades={[{ from: 0, to: 156 }, { from: 1481, to: 1694, out: true }]}
            handles={[[146, false], [1470, true]]} />
        </TrackRow>
        <TrackRow name="A4" h={60} rule>
          <AudioClip x={310} w={944} wave={stereo(A4_ONE, softer(A4_ONE), 1.4, true)} seed={41} handles={[[11, false], [906, true]]} />
          <AudioClip x={1256} w={360} wave={stereo(A4_TWO, softer(A4_TWO), 1.4, true)} seed={53} handles={[[10, false], [322, true]]} />
          <AudioClip x={1618} w={232} wave={stereo(A4_THREE, softer(A4_THREE), 1.4, true)} seed={67} handles={[[10, false], [194, true]]} />
        </TrackRow>
        <TrackRow name="A5" h={56} />
      </Tracks>
      <VScroll>
        <Scroll v well pad="14px 0 0" />
        <VDivider />
        <Scroll v well pad="0 0 4px" />
      </VScroll>
    </TracksRow>
    <HScroll><Scroll well grip={130} /></HScroll>
    <Pointer><Plus s={12} t={8} color="#fff" /></Pointer>
  </Timeline>
);

const MeterPanel = () => (
  <Meters>
    <MeterRow>
      <Meter>
        <ClipLight /><ClipLight />
        <Peak /><Peak />
      </Meter>
      <Svg w={8} h={680}>
        {Array.from({ length: 61 }, (_, i) => (
          <rect key={i} y={Math.round(22 + i * 10.87)} width={i % 6 ? 4 : 8} height="2" fill="#7d7d7d" />
        ))}
      </Svg>
      <Scale>
        <ScaleList>{LEVELS.map((l) => <span key={l}>{l}</span>)}</ScaleList>
        dB
      </Scale>
    </MeterRow>
    <Solos>
      <Solo aria-label="Solo left">S</Solo>
      <Solo aria-label="Solo right">S</Solo>
    </Solos>
  </Meters>
);

export default function App() {
  return (
    <>
      <Global />
      <Shell>
        <Header>
          <Nav>
            <HomeButton aria-label="Home"><Home /></HomeButton>
            <NavTab>Import</NavTab>
            <NavTab $on>Edit</NavTab>
            <NavTab>Export</NavTab>
          </Nav>
          <Title>Untitled</Title>
          <HeaderTools>
            <IconButton aria-label="Workspaces"><Workspaces /></IconButton>
            <IconButton aria-label="Quick export"><Share /></IconButton>
            <IconButton aria-label="Progress"><Progress /></IconButton>
            <IconButton aria-label="Full screen"><Expand /></IconButton>
          </HeaderTools>
        </Header>
        <Upper>
          <Monitor />
          <Effects />
        </Upper>
        <Lower>
          <ToolStrip as="aside">
            {TOOLS.map(([name, Icon, more], i) => (
              <Tool key={name} aria-label={name} $on={i === 0} $more={more}><Icon /></Tool>
            ))}
          </ToolStrip>
          <Sequence />
          <MeterPanel />
        </Lower>
        <Status>
          <span>Add or remove from existing selection.</span>
          <StatusRule />
        </Status>
      </Shell>
    </>
  );
}
